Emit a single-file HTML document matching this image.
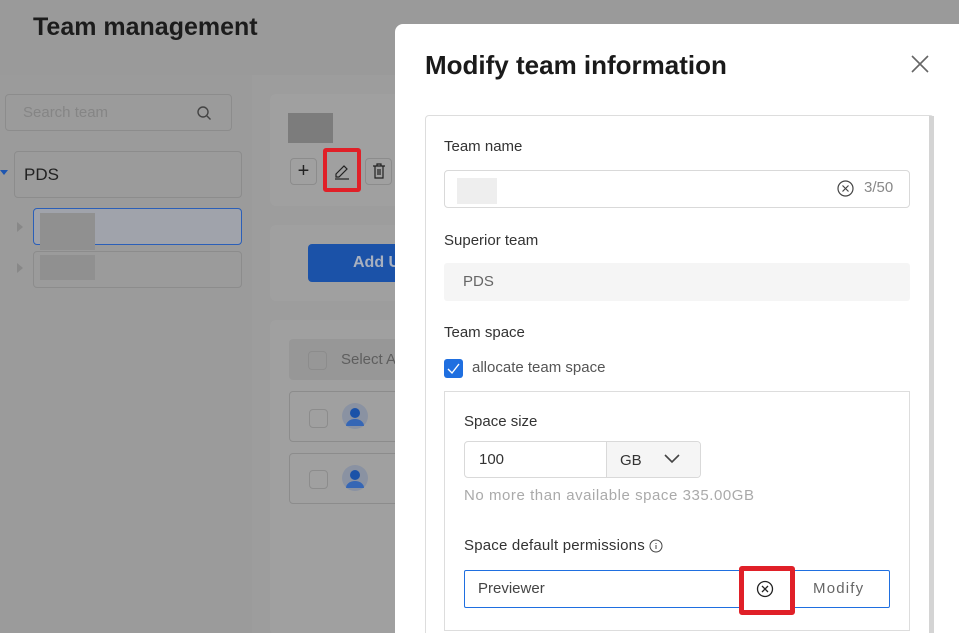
<!DOCTYPE html>
<html><head><meta charset="utf-8"><style>
*{box-sizing:border-box;margin:0;padding:0}
html,body{width:959px;height:633px;overflow:hidden}
body{background:#9a9a9a;font-family:"Liberation Sans",sans-serif;position:relative;color:#333}
.a{position:absolute}
.card{position:absolute;background:#a0a0a0;border-radius:6px}
.bd{border:1px solid #8c8c8c;border-radius:4px}
.drawer{position:absolute;left:395px;top:24px;width:564px;height:609px;background:#fff;border-radius:8px 0 0 0}
.lbl{position:absolute;font-size:15px;color:#333}
.inp{position:absolute;border:1px solid #d9d9d9;border-radius:4px;background:#fff}
</style></head><body>
<div class="a" style="left:33px;top:13px;font-size:25px;font-weight:bold;color:#1c1c1c">Team management</div>
<div class="a" style="left:0;top:75px;width:252px;height:560px;background:#9b9b9b"></div>
<div class="a bd" style="left:5px;top:94px;width:227px;height:37px"></div>
<div class="a" style="left:23px;top:104px;font-size:15px;color:#858585">Search team</div>
<svg class="a" style="left:196px;top:105px" width="16" height="16" viewBox="0 0 16 16"><circle cx="7" cy="7" r="5" fill="none" stroke="#444" stroke-width="1.4"/><path d="M11 11l3.5 3.5" stroke="#444" stroke-width="1.4"/></svg>
<svg class="a" style="left:0;top:170px" width="8" height="6"><path d="M0 0h8L4 5z" fill="#1e56b0"/></svg>
<div class="a bd" style="left:14px;top:151px;width:228px;height:47px"></div>
<div class="a" style="left:24px;top:165px;font-size:17px;color:#222">PDS</div>
<div class="a" style="left:33px;top:208px;width:209px;height:37px;border:1px solid #2b5fb8;border-radius:4px;background:#a0a3ab"></div>
<div class="a" style="left:40px;top:213px;width:55px;height:37px;background:#909090"></div>
<div class="a bd" style="left:33px;top:251px;width:209px;height:37px"></div>
<div class="a" style="left:40px;top:255px;width:55px;height:25px;background:#909090"></div>
<svg class="a" style="left:17px;top:222px" width="6" height="10"><path d="M0 0l6 5-6 5z" fill="#888"/></svg>
<svg class="a" style="left:17px;top:263px" width="6" height="10"><path d="M0 0l6 5-6 5z" fill="#888"/></svg>
<div class="a" style="left:252px;top:75px;width:143px;height:560px;background:#9d9d9d"></div>
<div class="card" style="left:270px;top:94px;width:140px;height:112px"></div>
<div class="a" style="left:288px;top:113px;width:45px;height:30px;background:#7c7c7c"></div>
<div class="a bd" style="left:290px;top:158px;width:27px;height:27px;font-size:20px;text-align:center;line-height:24px;color:#222">+</div>
<div class="a" style="left:323px;top:148px;width:38px;height:44px;border:4px solid #e02028;border-radius:3px"></div>
<svg class="a" style="left:333px;top:162px" width="18" height="18" viewBox="0 0 18 18"><path d="M3 12l8-8 3 3-8 8H3z" fill="none" stroke="#222" stroke-width="1.2"/><path d="M2 17h14" stroke="#222" stroke-width="1.2"/></svg>
<div class="a bd" style="left:365px;top:158px;width:27px;height:27px"></div>
<svg class="a" style="left:372px;top:163px" width="14" height="16"><path d="M1 3h12M5 3V1h4v2M3 3v12h8V3M6 6v6M8 6v6" fill="none" stroke="#222" stroke-width="1.2"/></svg>
<div class="card" style="left:270px;top:225px;width:140px;height:76px"></div>
<div class="a" style="left:308px;top:244px;width:100px;height:38px;background:#1b52a8;border-radius:4px;color:#a8b0bf;font-size:16px;font-weight:bold;line-height:38px;padding-left:45px">Add U</div>
<div class="card" style="left:270px;top:320px;width:140px;height:315px"></div>
<div class="a" style="left:289px;top:339px;width:120px;height:41px;background:#979797;border-radius:4px"></div>
<div class="a bd" style="left:308px;top:351px;width:19px;height:19px"></div>
<div class="a" style="left:341px;top:351px;font-size:15px;color:#5e5e5e">Select A</div>
<div class="a bd" style="left:289px;top:391px;width:120px;height:51px"></div>
<div class="a bd" style="left:289px;top:453px;width:120px;height:51px"></div>
<div class="a bd" style="left:309px;top:409px;width:19px;height:19px"></div>
<div class="a bd" style="left:309px;top:470px;width:19px;height:19px"></div>
<svg class="a" style="left:342px;top:403px" width="26" height="26"><circle cx="13" cy="13" r="13" fill="#8a92a2"/><circle cx="13" cy="10" r="5" fill="#1b52a8"/><path d="M4 23a9 7 0 0 1 18 0z" fill="#3566b5"/></svg>
<svg class="a" style="left:342px;top:465px" width="26" height="26"><circle cx="13" cy="13" r="13" fill="#8a92a2"/><circle cx="13" cy="10" r="5" fill="#1b52a8"/><path d="M4 23a9 7 0 0 1 18 0z" fill="#3566b5"/></svg>

<div class="drawer"></div>
<div class="a" style="left:425px;top:50px;font-size:26px;font-weight:bold;color:#1a1a1a">Modify team information</div>
<svg class="a" style="left:911px;top:55px" width="18" height="18"><path d="M1 1l16 16M17 1L1 17" stroke="#666" stroke-width="1.6"/></svg>
<div class="a" style="left:425px;top:115px;width:509px;height:530px;border:1px solid #ddd;border-radius:4px"></div>
<div class="a" style="left:929px;top:116px;width:5px;height:520px;background:#d4d4d4"></div>
<div class="lbl" style="left:444px;top:138px">Team name</div>
<div class="inp" style="left:444px;top:170px;width:466px;height:38px"></div>
<div class="a" style="left:457px;top:178px;width:40px;height:26px;background:#eee"></div>
<svg class="a" style="left:837px;top:180px" width="17" height="17"><circle cx="8.5" cy="8.5" r="7.5" fill="none" stroke="#444" stroke-width="1.2"/><path d="M5.5 5.5l6 6M11.5 5.5l-6 6" stroke="#444" stroke-width="1.2"/></svg>
<div class="a" style="left:864px;top:179px;font-size:15px;color:#888">3/50</div>
<div class="lbl" style="left:444px;top:232px">Superior team</div>
<div class="a" style="left:444px;top:263px;width:466px;height:38px;background:#f5f5f5;border-radius:3px"></div>
<div class="a" style="left:463px;top:273px;font-size:15px;color:#666">PDS</div>
<div class="lbl" style="left:444px;top:324px">Team space</div>
<div class="a" style="left:444px;top:359px;width:19px;height:19px;background:#1f6fe0;border-radius:3px"></div>
<svg class="a" style="left:447px;top:362px" width="13" height="13"><path d="M1 7l4 4 7-9" fill="none" stroke="#fff" stroke-width="1.4"/></svg>
<div class="a" style="left:472px;top:359px;font-size:15px;color:#555">allocate team space</div>
<div class="a" style="left:444px;top:391px;width:466px;height:240px;border:1px solid #ddd"></div>
<div class="lbl" style="left:464px;top:413px">Space size</div>
<div class="inp" style="left:464px;top:441px;width:237px;height:37px"></div>
<div class="a" style="left:606px;top:442px;width:94px;height:35px;background:#f5f5f5;border-left:1px solid #d9d9d9;border-radius:0 4px 4px 0"></div>
<div class="a" style="left:479px;top:451px;font-size:15px;color:#333">100</div>
<div class="a" style="left:620px;top:452px;font-size:15px;color:#333">GB</div>
<svg class="a" style="left:664px;top:454px" width="16" height="10"><path d="M1 1l7 7 7-7" fill="none" stroke="#444" stroke-width="1.6"/></svg>
<div class="a" style="left:464px;top:487px;font-size:15px;letter-spacing:0.55px;color:#aaa">No more than available space 335.00GB</div>
<div class="lbl" style="left:464px;top:537px;letter-spacing:0.2px">Space default permissions</div>
<svg class="a" style="left:649px;top:539px" width="14" height="14"><circle cx="7" cy="7" r="6" fill="none" stroke="#444"/><path d="M7 6v4M7 4v1" stroke="#444"/></svg>
<div class="a" style="left:464px;top:570px;width:426px;height:38px;border:1px solid #1f6fe0;border-radius:2px"></div>
<div class="a" style="left:478px;top:580px;font-size:15px;color:#444">Previewer</div>
<div class="a" style="left:813px;top:580px;font-size:15px;color:#666;letter-spacing:1.2px">Modify</div>
<div class="a" style="left:739px;top:566px;width:56px;height:49px;border:5px solid #e02028;border-radius:3px;background:#fff"></div>
<svg class="a" style="left:756px;top:580px" width="18" height="18"><circle cx="9" cy="9" r="7.5" fill="none" stroke="#222" stroke-width="1.3"/><path d="M6 6l6 6M12 6l-6 6" stroke="#222" stroke-width="1.3"/></svg>
</body></html>
